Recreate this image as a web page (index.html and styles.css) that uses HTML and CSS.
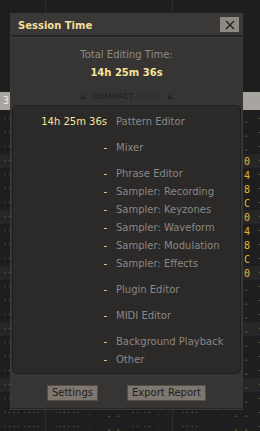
FILE: index.html
```html
<!DOCTYPE html>
<html lang="en">
<head>
  <meta charset="UTF-8">
  <title>Session Time</title>
  <link rel="stylesheet" href="styles.css">
</head>
<body>

<div class="pattern" id="pattern">
  <div class="prow head">
    <div class="track a"></div><div class="track b"></div><div class="track c"></div>
  </div>
  <div class="prow cursor">
    <div class="track a"><span class="cursor-num">3</span></div><div class="track b"></div><div class="track c"></div>
  </div>
</div>

<div class="dialog">
  <div class="titlebar">
    <span class="title">Session Time</span>
    <button class="close">
      <svg viewBox="0 0 10 10" width="10" height="10"><path d="M1 1L9 9M9 1L1 9" stroke="#1c1b1a" stroke-width="1.2" fill="none"/></svg>
    </button>
  </div>
  <div class="body">
    <div class="total-label">Total Editing Time:</div>
    <div class="total-value">14h 25m 36s</div>
    <div class="compact"><span class="tri"></span><span class="compact-word">COMPACT</span> MODE<span class="tri"></span></div>

    <div class="list">
      <div class="group">
        <div class="row"><span class="val">14h 25m 36s</span><span class="lbl">Pattern Editor</span></div>
      </div>
      <div class="group">
        <div class="row"><span class="val">-</span><span class="lbl">Mixer</span></div>
      </div>
      <div class="group">
        <div class="row"><span class="val">-</span><span class="lbl">Phrase Editor</span></div>
        <div class="row"><span class="val">-</span><span class="lbl">Sampler: Recording</span></div>
        <div class="row"><span class="val">-</span><span class="lbl">Sampler: Keyzones</span></div>
        <div class="row"><span class="val">-</span><span class="lbl">Sampler: Waveform</span></div>
        <div class="row"><span class="val">-</span><span class="lbl">Sampler: Modulation</span></div>
        <div class="row"><span class="val">-</span><span class="lbl">Sampler: Effects</span></div>
      </div>
      <div class="group">
        <div class="row"><span class="val">-</span><span class="lbl">Plugin Editor</span></div>
      </div>
      <div class="group">
        <div class="row"><span class="val">-</span><span class="lbl">MIDI Editor</span></div>
      </div>
      <div class="group">
        <div class="row"><span class="val">-</span><span class="lbl">Background Playback</span></div>
        <div class="row"><span class="val">-</span><span class="lbl">Other</span></div>
      </div>
    </div>

    <div class="actions">
      <button class="btn">Settings</button>
      <button class="btn">Export Report</button>
    </div>
  </div>
</div>

<script>
  // pattern editor lines behind the dialog
  const TRACK_A = [[3, ''], [9, '..'], [11, '..'], [9, '..'], [13, '..']];
  const TRACK_B = [[8, ''], [8, '..'], [10, '..'], [8, '..'], [7, '-', 'dim'], [20, '-', 'dim'],
                   [9, '-', 'fx'], [15, '-', 'fx'], [12, '..'], [14, '..'], [7, '-', 'dim'], [8, '-', 'dim']];
  const HEX = ['0', '4', '8', 'C'];

  function cells(list) {
    return list.map(c => `<span class="cell ${c[2] || ''}" style="width:${c[0]}px">${c[1]}</span>`).join('');
  }

  function trackC(i) {
    let v = '-';
    if (i >= 3 && i <= 11) v = HEX[(i - 3) % 4];
    const fx = v === '-' ? [13, v, 'fx'] : [13, v, 'hex'];
    return cells([[8, ''], [9, '..'], [21, '..'], [9, '-', 'dim'], [14, '-', 'dim'], [10, '-', 'fx'],
                  fx, [3, '.']]);
  }

  const pattern = document.getElementById('pattern');
  for (let i = 0; i < 23; i++) {
    const row = document.createElement('div');
    row.className = 'prow' + (i % 4 === 3 ? ' beat' : '');
    row.innerHTML = `<div class="track a">${cells(TRACK_A)}</div>` +
                    `<div class="track b">${cells(TRACK_B)}</div>` +
                    `<div class="track c">${trackC(i)}</div>`;
    pattern.appendChild(row);
  }
</script>

</body>
</html>
```

FILE: styles.css
```css
body {
  margin: 0;
  width: 260px;
  height: 431px;
  overflow: hidden;
  position: relative;
  background-color: #1e1e1e;
  font-family: "DejaVu Sans", sans-serif;
  font-size: 10px;
}

/* pattern editor in the background */
.pattern {
  display: flex;
  flex-direction: column;
}
.prow {
  display: flex;
  height: 14px;
  font-family: "DejaVu Sans Mono", monospace;
}
.prow.head {
  height: 92px;
}
.prow.cursor {
  height: 18px;
  margin-bottom: 2px;
  background-color: #a8a49f;
}
.prow.beat {
  background-color: #262626;
}
.track {
  display: flex;
  flex: none;
  white-space: pre;
  overflow: hidden;
}
.track.a {
  width: 45px;
  border-right: 1px solid #2d2d2d;
}
.track.b {
  width: 126px;
  border-right: 1px solid #2d2d2d;
}
.track.c {
  flex: 1;
}
.cursor .track {
  border-right-color: transparent;
}
.cursor-num {
  padding-left: 3px;
  line-height: 18px;
  font-size: 10px;
  color: #ecebe9;
}
.cell {
  flex: none;
  font-size: 7px;
  line-height: 11px;
  color: #6a6a6a;
}
.cell.dim {
  color: #4a4a4a;
  line-height: 14px;
  padding-top: 2px;
}
.cell.fx {
  color: #d2a52c;
  line-height: 14px;
  padding-top: 3px;
}
.cell.hex {
  font-size: 10px;
  line-height: 14px;
  padding-top: 1px;
  color: #e4b630;
}

/* dialog */
.dialog {
  position: absolute;
  left: 10px;
  top: 13px;
  width: 233px;
  height: 397px;
  box-sizing: border-box;
  background-color: #272625;
  border: 1px solid #3a3938;
  display: flex;
  flex-direction: column;
}
.titlebar {
  height: 21px;
  flex: none;
  display: flex;
  align-items: center;
  justify-content: space-between;
  padding: 0 3px 0 7px;
  background-color: #3a3938;
}
.title {
  padding-top: 2px;
  font-weight: bold;
  color: #f6df98;
}
.close {
  width: 19px;
  height: 15px;
  padding: 0;
  border: none;
  background-color: #8e8983;
  display: flex;
  align-items: center;
  justify-content: center;
}
.body {
  margin: 2px 0 1px;
  padding: 10px 1px 0;
  flex: 1;
  background-color: #363534;
  border-top: 1px solid #403f3e;
  display: flex;
  flex-direction: column;
  text-align: center;
}
.total-label {
  line-height: 14px;
  color: #8d8a87;
}
.total-value {
  margin-top: 4px;
  line-height: 14px;
  font-weight: bold;
  color: #f8e29c;
}
.compact {
  margin-top: 10px;
  line-height: 12px;
  font-family: "Open Sans", sans-serif;
  font-size: 8.5px;
  font-weight: bold;
  color: #2e2d2c;
  display: flex;
  align-items: center;
  justify-content: center;
}
.compact-word {
  color: #262524;
  margin-right: 2px;
}
.tri {
  width: 0;
  height: 0;
  border-left: 3.5px solid transparent;
  border-right: 3.5px solid transparent;
  border-bottom: 5px solid #272625;
  margin: 0 6px;
}

.list {
  margin-top: 3px;
  height: 269px;
  box-sizing: border-box;
  padding: 7px 0 4px;
  background-color: #2b2a29;
  border: 1px solid #201f1e;
  border-radius: 5px;
  display: flex;
  flex-direction: column;
  gap: 8px;
  text-align: left;
}
.row {
  display: grid;
  grid-template-columns: 94px 1fr;
  column-gap: 9px;
  line-height: 18px;
}
.val {
  text-align: right;
  color: #f8e29c;
}
.lbl {
  color: #8a8785;
}

.actions {
  margin-top: 11px;
  display: flex;
  justify-content: center;
  gap: 29px;
}
.btn {
  height: 16px;
  padding: 0 4px;
  border: 1px solid #554f49;
  background-color: #7e776f;
  color: #1e1c1a;
  font-family: "DejaVu Sans", sans-serif;
  font-size: 10px;
  line-height: 14px;
}
```
